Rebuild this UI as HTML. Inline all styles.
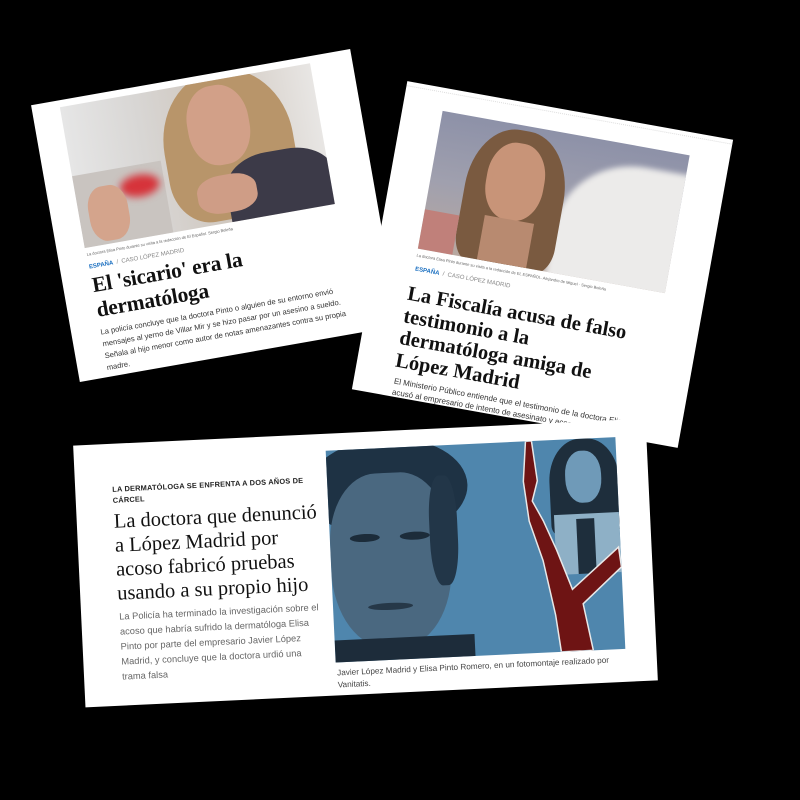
<!DOCTYPE html>
<html><head><meta charset="utf-8"><style>
html,body{margin:0;padding:0;background:#000;width:800px;height:800px;overflow:hidden;position:relative}
.card{position:absolute;background:#fff;overflow:hidden}
.abs{position:absolute}
.sans{font-family:"Liberation Sans",sans-serif}
.serif{font-family:"Liberation Serif",serif}
.nw{white-space:nowrap}
</style></head><body>

<!-- Card 1 -->
<div class="card" style="left:53px;top:75px;width:324px;height:281px;transform:rotate(-10deg)">
  <div class="abs" style="left:28px;top:7px;width:254px;height:143px;overflow:hidden;background:linear-gradient(90deg,#e6e6e6 0%,#d8d6d4 30%,#cfc6bd 60%,#e8e6e4 100%)">
    <div class="abs" style="left:0;top:70px;width:90px;height:73px;background:#c9c4c0"></div>
    <div class="abs" style="left:45px;top:80px;width:40px;height:22px;border-radius:50%;background:#d6333a;filter:blur(4px)"></div>
    <div class="abs" style="left:95px;top:-10px;width:130px;height:150px;border-radius:50% 50% 30% 30%;background:#b8956a"></div>
    <div class="abs" style="left:150px;top:80px;width:110px;height:80px;border-radius:40% 40% 0 0;background:#3c3a48"></div>
    <div class="abs" style="left:122px;top:5px;width:62px;height:80px;border-radius:45%;background:#d2a088"></div>
    <div class="abs" style="left:10px;top:85px;width:40px;height:55px;border-radius:40%;background:#d4a48c"></div>
    <div class="abs" style="left:120px;top:95px;width:60px;height:38px;border-radius:40%;background:#cf9d86"></div>
  </div>
  <div class="abs sans nw" style="left:29px;top:154px;font-size:4px;color:#666">La doctora Elisa Pinto durante su visita a la redacción de El Español. Sergio Beleña</div>
  <div class="abs sans nw" style="left:29px;top:167px;font-size:6px;color:#888"><b style="color:#1a6fc0">ESPAÑA</b> &nbsp;/&nbsp; CASO LÓPEZ MADRID</div>
  <div class="abs serif" style="left:29px;top:176px;font-size:21.5px;font-weight:bold;line-height:25px;color:#111;letter-spacing:-0.2px">El 'sicario' era la<br>dermatóloga</div>
  <div class="abs sans nw" style="left:29px;top:230px;font-size:7.6px;line-height:12px;color:#333">La policía concluye que la doctora Pinto o alguien de su entorno envió<br>mensajes al yerno de Villar Mir y se hizo pasar por un asesino a sueldo.<br>Señala al hijo menor como autor de notas amenazantes contra su propia<br>madre.</div>
</div>

<!-- Card 2 -->
<div class="card" style="left:377px;top:108px;width:331px;height:313px;transform:rotate(10.2deg)">
  <div class="abs" style="left:0;top:4px;width:331px;border-top:1px dotted #ddd"></div>
  <div class="abs" style="left:40px;top:23px;width:251px;height:140px;overflow:hidden;background:linear-gradient(180deg,#8d91a8 0%,#a0a0ae 50%,#b8a8a0 100%)">
    <div class="abs" style="left:130px;top:20px;width:160px;height:150px;border-radius:50% 0 0 0;background:#ecebea;filter:blur(3px)"></div>
    <div class="abs" style="left:35px;top:5px;width:100px;height:140px;border-radius:45% 45% 20% 20%;background:#7a5a40"></div>
    <div class="abs" style="left:55px;top:18px;width:58px;height:78px;border-radius:45%;background:#c89478"></div>
    <div class="abs" style="left:60px;top:95px;width:50px;height:45px;background:#b88a70"></div>
    <div class="abs" style="left:0;top:100px;width:35px;height:40px;background:#c0807a"></div>
  </div>
  <div class="abs sans nw" style="left:40px;top:167px;font-size:4px;color:#666">La doctora Elisa Pinto durante su visita a la redacción de EL ESPAÑOL. Alejandro de Miguel · Sergio Beleña</div>
  <div class="abs sans nw" style="left:41px;top:181px;font-size:6px;color:#888"><b style="color:#1a6fc0">ESPAÑA</b> &nbsp;/&nbsp; CASO LÓPEZ MADRID</div>
  <div class="abs serif nw" style="left:38px;top:198px;font-size:20.5px;font-weight:bold;line-height:22.5px;color:#111">La Fiscalía acusa de falso<br>testimonio a la<br>dermatóloga amiga de<br>López Madrid</div>
  <div class="abs sans nw" style="left:40px;top:292px;font-size:8px;line-height:11px;color:#333">El Ministerio Público entiende que el testimonio de la doctora Elisa P<br>acusó al empresario de intento de asesinato y acoso...</div>
</div>

<!-- Card 3 -->
<div class="card" style="left:79px;top:432px;width:573px;height:262px;transform:rotate(-2.7deg)">
  <div class="abs sans nw" style="left:37px;top:40px;font-size:7.4px;font-weight:bold;line-height:11px;color:#222;letter-spacing:0.2px">LA DERMATÓLOGA SE ENFRENTA A DOS AÑOS DE<br>CÁRCEL</div>
  <div class="abs serif nw" style="left:37px;top:66px;font-size:20.5px;line-height:24px;color:#111">La doctora que denunció<br>a López Madrid por<br>acoso fabricó pruebas<br>usando a su propio hijo</div>
  <div class="abs sans nw" style="left:38px;top:166px;font-size:9.3px;line-height:15px;color:#666">La Policía ha terminado la investigación sobre el<br>acoso que habría sufrido la dermatóloga Elisa<br>Pinto por parte del empresario Javier López<br>Madrid, y concluye que la doctora urdió una<br>trama falsa</div>
  <div class="abs" style="left:252px;top:17px;width:290px;height:212px;overflow:hidden;background:#4f86ad">
    <div class="abs" style="left:-20px;top:-10px;width:160px;height:100px;border-radius:50%;background:#1e3244"></div>
    <div class="abs" style="left:0;top:25px;width:120px;height:175px;border-radius:40% 40% 45% 45%;background:#4a6880"></div>
    <div class="abs" style="left:100px;top:30px;width:28px;height:110px;border-radius:40%;background:#223648"></div>
    <div class="abs" style="left:20px;top:85px;width:30px;height:8px;border-radius:50%;background:#1c2c3a"></div>
    <div class="abs" style="left:70px;top:85px;width:30px;height:8px;border-radius:50%;background:#1c2c3a"></div>
    <div class="abs" style="left:35px;top:155px;width:45px;height:7px;border-radius:50%;background:#263848"></div>
    <div class="abs" style="left:0;top:190px;width:140px;height:30px;background:#1d2c3a"></div>
    <div class="abs" style="left:222px;top:0;width:70px;height:95px;border-radius:45% 45% 10% 10%;background:#1e2e3c"></div>
    <div class="abs" style="left:238px;top:12px;width:36px;height:52px;border-radius:45%;background:#6f9ab8"></div>
    <div class="abs" style="left:225px;top:75px;width:65px;height:60px;background:#8eb0c6"></div>
    <div class="abs" style="left:247px;top:80px;width:18px;height:55px;background:#1e2e3c"></div>
    <svg class="abs" style="left:0;top:0" width="290" height="212" viewBox="0 0 290 212">
      <path d="M200 0 L206 0 L210 40 L204 60 L214 80 L226 110 L240 150 L288 110 L290 130 L250 165 L258 212 L226 212 L222 175 L212 120 L200 80 L196 40 Z" fill="#6e1414" stroke="#e8e8e8" stroke-width="1.5"/>
    </svg>
  </div>
  <div class="abs sans nw" style="left:253px;top:234px;font-size:8.2px;line-height:12px;color:#444">Javier López Madrid y Elisa Pinto Romero, en un fotomontaje realizado por<br>Vanitatis.</div>
</div>

</body></html>
